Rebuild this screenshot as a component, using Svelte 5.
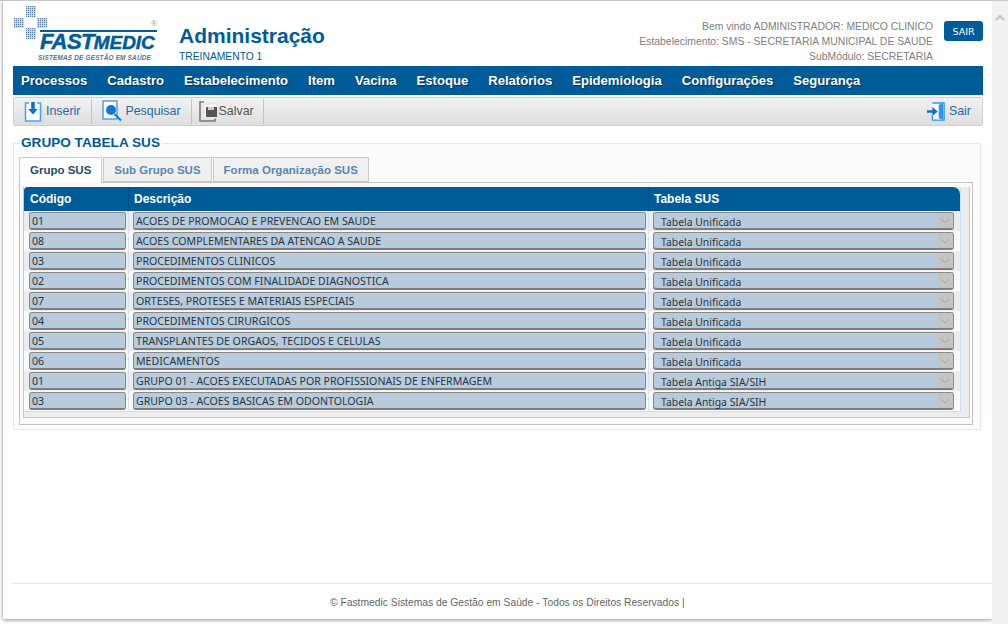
<script>
  const menu = ['Processos', 'Cadastro', 'Estabelecimento', 'Item', 'Vacina', 'Estoque', 'Relatórios', 'Epidemiologia', 'Configurações', 'Segurança'];
  const tabs = ['Grupo SUS', 'Sub Grupo SUS', 'Forma Organização SUS'];
  const rows = [
    ['01', 'ACOES DE PROMOCAO E PREVENCAO EM SAUDE', 'Tabela Unificada'],
    ['08', 'ACOES COMPLEMENTARES DA ATENCAO A SAUDE', 'Tabela Unificada'],
    ['03', 'PROCEDIMENTOS CLINICOS', 'Tabela Unificada'],
    ['02', 'PROCEDIMENTOS COM FINALIDADE DIAGNOSTICA', 'Tabela Unificada'],
    ['07', 'ORTESES, PROTESES E MATERIAIS ESPECIAIS', 'Tabela Unificada'],
    ['04', 'PROCEDIMENTOS CIRURGICOS', 'Tabela Unificada'],
    ['05', 'TRANSPLANTES DE ORGAOS, TECIDOS E CELULAS', 'Tabela Unificada'],
    ['06', 'MEDICAMENTOS', 'Tabela Unificada'],
    ['01', 'GRUPO 01 - ACOES EXECUTADAS POR PROFISSIONAIS DE ENFERMAGEM', 'Tabela Antiga SIA/SIH'],
    ['03', 'GRUPO 03 - ACOES BASICAS EM ODONTOLOGIA', 'Tabela Antiga SIA/SIH']
  ];
</script>

<div class="window">
  <div class="page">
    <header class="head">
      <div class="logo">
        <svg class="cross" width="42" height="42" viewBox="0 0 42 42">
          <defs>
            <pattern id="dots" width="2" height="2" patternUnits="userSpaceOnUse">
              <rect width="2" height="2" fill="#dbe4ef" />
              <rect width="1.2" height="1.2" fill="#5f7fa6" />
            </pattern>
          </defs>
          <rect x="12" y="0" width="10" height="11" fill="url(#dots)" />
          <rect x="0" y="12" width="10" height="10" fill="url(#dots)" />
          <rect x="23" y="12" width="10" height="10" fill="url(#dots)" />
          <rect x="12" y="22" width="10" height="11" fill="url(#dots)" />
        </svg>
        <span class="reg">®</span>
        <div class="brand"><span class="fast">FAST</span><span class="medic">MEDIC</span></div>
        <div class="slogan">SISTEMAS DE GESTÃO EM SAÚDE</div>
      </div>
      <div class="title">
        <h1>Administração</h1>
        <div class="sub">TREINAMENTO 1</div>
      </div>
      <div class="user">
        <div>Bem vindo ADMINISTRADOR: MEDICO CLINICO</div>
        <div>Estabelecimento: SMS - SECRETARIA MUNICIPAL DE SAUDE</div>
        <div>SubMódulo: SECRETARIA</div>
      </div>
      <button class="logout">SAIR</button>
    </header>

    <nav class="menu">
      {#each menu as item}
        <span>{item}</span>
      {/each}
    </nav>

    <div class="toolbar">
      <div class="tool">
        <svg width="18" height="21" viewBox="0 0 18 21">
          <path d="M5 2H1.5v18h15V2H13" fill="#fff" stroke="#4ba3f0" stroke-width="1.6" />
          <path d="M7.2 1h3.6v7h3L9 13.5 4.2 8h3z" fill="#0f6fc6" />
        </svg>
        Inserir
      </div>
      <div class="tool search">
        <svg width="21" height="22" viewBox="0 0 21 22">
          <path d="M1 1h14v18H1z" fill="#fff" stroke="#4ba3f0" stroke-width="1.5" />
          <circle cx="9" cy="10" r="5" fill="#1276d2" />
          <path d="M12.5 14l6.5 6.5" stroke="#1276d2" stroke-width="2" />
        </svg>
        Pesquisar
      </div>
      <div class="tool save">
        <svg width="19" height="21" viewBox="0 0 19 21">
          <path d="M5 1H1v19h15v-3" fill="none" stroke="#777" stroke-width="1.6" />
          <path d="M5 3h13v14H5z" fill="#fff" stroke="#ddd" stroke-width="1" />
          <path d="M7 6h11v10H7z" fill="#555" />
          <path d="M9 6h6v3H9z" fill="#ccc" />
        </svg>
        Salvar
      </div>
      <div class="tool exit">
        <svg width="18" height="21" viewBox="0 0 20 21">
          <path d="M6 1h13v19H6v-5" fill="#fff" stroke="#2f95ee" stroke-width="1.5" />
          <path d="M13 3l5-2v19l-5-2z" fill="#2f95ee" />
          <path d="M0 9h6V5.5l6 5-6 5V12H0z" fill="#0f6fc6" />
        </svg>
        Sair
      </div>
    </div>

    <fieldset class="group">
      <legend>GRUPO TABELA SUS</legend>
      <div class="tabs">
        {#each tabs as tab, i}
          <div class="tab" class:active={i === 0}>{tab}</div>
        {/each}
      </div>
      <div class="panel">
        <div class="inner">
          <table>
            <thead>
              <tr>
                <th class="c1">Código</th>
                <th class="c2">Descrição</th>
                <th>Tabela SUS</th>
              </tr>
            </thead>
            <tbody>
              {#each rows as row}
                <tr>
                  <td class="c1"><div class="field code">{row[0]}</div></td>
                  <td class="c2"><div class="field">{row[1]}</div></td>
                  <td>
                    <div class="field select">
                      <span>{row[2]}</span>
                      <i class="arrow">
                        <svg width="10" height="6" viewBox="0 0 10 6"><path d="M1 1l4 4 4-4" fill="none" stroke="#a2a2a2" /></svg>
                      </i>
                    </div>
                  </td>
                </tr>
              {/each}
            </tbody>
          </table>
        </div>
      </div>
    </fieldset>

    <footer class="foot">© Fastmedic Sistemas de Gestão em Saúde - Todos os Direitos Reservados |</footer>
  </div>

  <div class="scroll">
    <svg width="10" height="6" viewBox="0 0 10 6"><path d="M1 5l4-4 4 4" fill="none" stroke="#c4c4c4" stroke-width="2" /></svg>
  </div>
</div>

<style>
  :global(body) {
    margin: 0;
    background: #fff;
    font-family: "Liberation Sans", Arial, sans-serif;
  }

  .window {
    display: flex;
    width: 1008px;
    height: 624px;
    overflow: hidden;
    border-top: 1px solid #c9c9c9;
    box-sizing: border-box;
  }

  .page {
    width: 989px;
    height: 618px;
    margin-left: 3px;
    padding: 0 9px 0 10px;
    box-sizing: border-box;
    background: #fff;
    box-shadow: -1px 0 2px #bbb, 0 2px 3px #bbb;
    display: flex;
    flex-direction: column;
  }

  .scroll {
    width: 16px;
    height: 100%;
    background: #f1f1f1;
    text-align: center;
    padding-top: 6px;
    box-sizing: border-box;
  }

  .head {
    display: flex;
    height: 65px;
    flex: none;
  }

  .logo {
    position: relative;
    width: 166px;
    flex: none;
  }

  .cross {
    position: absolute;
    left: 1px;
    top: 5px;
  }

  .reg {
    position: absolute;
    left: 138px;
    top: 18px;
    font-size: 8px;
    color: #8a9aac;
  }

  .brand {
    position: absolute;
    left: 27px;
    top: 29px;
    width: 117px;
    border-top: 2px solid #005c99;
    height: 21px;
    font-style: italic;
    font-weight: bold;
    color: #005c99;
    line-height: 20px;
    white-space: nowrap;
    -webkit-text-stroke: 0.5px #005c99;
  }

  .fast {
    font-size: 22px;
    letter-spacing: -0.6px;
  }

  .medic {
    font-size: 19px;
    letter-spacing: -0.1px;
  }

  .slogan {
    position: absolute;
    left: 25px;
    top: 53px;
    font-size: 6.4px;
    font-weight: bold;
    font-style: italic;
    color: #5d6f80;
    letter-spacing: 0.2px;
    white-space: nowrap;
  }

  .title {
    padding-top: 22px;
  }

  h1 {
    margin: 0;
    font-size: 21px;
    line-height: 26px;
    color: #005c99;
  }

  .sub {
    font-size: 10.3px;
    line-height: 12px;
    margin-top: 2px;
    color: #005c99;
  }

  .user {
    margin-left: auto;
    padding-top: 18px;
    text-align: right;
    font-size: 10.4px;
    line-height: 15px;
    color: #808080;
  }

  .logout {
    width: 39px;
    height: 20px;
    margin: 20px 0 0 11px;
    padding: 0;
    border: 0;
    border-radius: 3px;
    background: #005c99;
    color: #fff;
    font-family: "DejaVu Sans", sans-serif;
    font-size: 9.5px;
  }

  .menu {
    flex: none;
    display: flex;
    gap: 20px;
    height: 29px;
    padding-left: 8px;
    background: #005c99;
    color: #fff;
    font-size: 13.1px;
    font-weight: bold;
    line-height: 30px;
    text-shadow: 1px 1px 1px #00365a;
  }

  .toolbar {
    flex: none;
    display: flex;
    height: 29px;
    margin: 2px 0 0 0;
    box-sizing: border-box;
    border: 1px solid #d0d0d0;
    border-radius: 2px;
    background: linear-gradient(#f2f2f2, #dedede);
    font-size: 12.4px;
    line-height: 25px;
    color: #1d6ba3;
  }

  .tool {
    display: flex;
    align-items: center;
    gap: 4px;
    padding: 0 11px 1px 10px;
    border-right: 1px solid #c4c4c4;
    margin: 1px 0;
  }

  .search {
    gap: 2px;
    padding-right: 10px;
  }

  .save {
    gap: 1px;
    padding-left: 7px;
    padding-right: 9px;
    color: #555;
  }

  .exit {
    margin-left: auto;
    border-right: 0;
    padding-right: 11px;
  }

  .group {
    flex: none;
    width: 966px;
    height: 295px;
    margin: 9px 0 0 0;
    padding: 0 7px;
    box-sizing: border-box;
    border: 1px solid #dfe9fb;
    background: #fcfcfc;
  }

  legend {
    padding: 0 2px 0 0;
    font-size: 13.6px;
    font-weight: bold;
    line-height: 16px;
    color: #005c99;
    background: #fff;
  }

  .tabs {
    display: flex;
    gap: 1px;
    margin: 6px 0 0 -2px;
    height: 26px;
    position: relative;
    z-index: 1;
  }

  .tab {
    box-sizing: border-box;
    height: 25px;
    padding: 0 10px;
    border: 1px solid #ccc;
    border-bottom: 1px solid #c8c8c8;
    background: #f0f0f0;
    color: #5a86b0;
    font-size: 11.5px;
    font-weight: bold;
    line-height: 25px;
  }

  .tab.active {
    height: 26px;
    border-bottom: 0;
    background: #fff;
    color: #2c4b68;
  }

  .panel {
    margin: -1px 0 0 -2px;
    width: 954px;
    height: 243px;
    box-sizing: border-box;
    border: 1px solid #c4c4c4;
    padding: 4px 2px 0 3px;
    background: #fafafa;
  }

  .inner {
    height: 231px;
    box-sizing: border-box;
    border: 1px solid #bcc8d6;
    border-top: 0;
    background: #ececec;
  }

  table {
    width: 937px;
    border-collapse: separate;
    border-spacing: 0;
    table-layout: fixed;
    border-right: 1px solid #cddcf6;
    border-bottom: 1px solid #cddcf6;
  }

  th {
    height: 24px;
    padding: 0 0 0 5px;
    box-sizing: border-box;
    background: #005c99;
    border-left: 1px solid #004e83;
    color: #fff;
    font-size: 12px;
    font-weight: bold;
    text-align: left;
  }

  th:first-child {
    padding-left: 6px;
    border-left: 0;
    border-top-left-radius: 4px;
  }

  th:last-child {
    border-top-right-radius: 7px;
  }

  .c1 {
    width: 104px;
  }

  .c2 {
    width: 520px;
  }

  td {
    height: 20px;
    padding: 0 6px 0 4px;
    box-sizing: border-box;
    border-left: 1px solid #d6e2f7;
  }

  td:first-child {
    padding: 0 0 0 5px;
    border-left: 0;
  }

  td.c2 {
    padding-right: 2px;
  }

  tbody tr:nth-child(odd) td {
    background: #ececec;
  }

  tbody tr:nth-child(even) td {
    background: #fafafa;
  }

  .field {
    height: 18px;
    box-sizing: border-box;
    border: 1px solid #8a8a8a;
    border-bottom: 2px solid #7d7d7d;
    border-radius: 3px;
    background: #b8cbdc;
    padding-left: 2px;
    color: #2a3642;
    font-family: "Noto Sans", sans-serif;
    font-size: 10.6px;
    line-height: 16px;
    white-space: nowrap;
    overflow: hidden;
  }

  .code {
    width: 97px;
  }

  .select {
    display: flex;
    justify-content: space-between;
    padding-left: 7px;
    border-bottom-width: 1px;
    box-shadow: inset 0 -1px #7d7d7d;
    font-size: 10.4px;
    line-height: 18px;
  }

  .arrow {
    width: 16px;
    height: 100%;
    background: #c4c4c4;
    box-shadow: inset 0 -1px #7d7d7d;
    text-align: center;
    line-height: 15px;
  }

  .foot {
    flex: none;
    margin-top: auto;
    margin-right: -9px;
    height: 35px;
    padding-left: 317px;
    border-top: 1px solid #e6e6e6;
    font-size: 10.3px;
    line-height: 37px;
    color: #666;
  }
</style>
